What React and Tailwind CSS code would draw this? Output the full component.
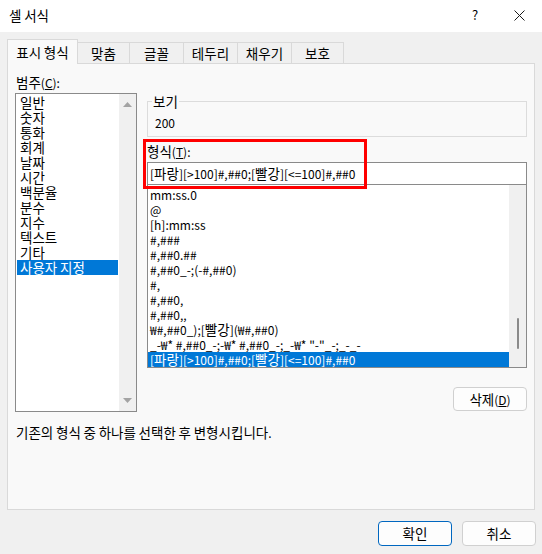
import React from "react";

const F = { fontFamily: '"Noto Sans CJK KR", "Noto Sans", sans-serif' };

function K({ t }) {
  const parts = t.split(/([\u3131-\uD7A3]+)/);
  return (
    <span>
      {parts.map((p, i) =>
        /[\u3131-\uD7A3]/.test(p) ? (
          <span key={i} className="text-[13.5px]">{p}</span>
        ) : (
          <React.Fragment key={i}>{p}</React.Fragment>
        )
      )}
    </span>
  );
}

const categories = ["일반", "숫자", "통화", "회계", "날짜", "시간", "백분율", "분수", "지수", "텍스트", "기타", "사용자 지정"];
const formats = [
  "mm:ss.0",
  "@",
  "[h]:mm:ss",
  "#,###",
  "#,##0.##",
  "#,##0_-;(-#,##0)",
  "#,",
  "#,##0,",
  "#,##0,,",
  "₩#,##0_);[빨강](₩#,##0)",
  '_-₩* #,##0_-;-₩* #,##0_-;_-₩* "-"_-;_-_-',
  "[파랑][>100]#,##0;[빨강][<=100]#,##0",
];

function Tab({ label, selected, w }) {
  if (selected) {
    return (
      <div className={`${w} h-[25px] -mb-px mr-[-1px] relative z-10 bg-[#f9f9f9] border border-b-0 border-[#d9d9d9] flex items-center justify-center text-black whitespace-nowrap`}>
        <K t={label} />
      </div>
    );
  }
  return (
    <div className={`${w} h-[21px] mr-[-1px] bg-[#f0f0f0] border border-b-0 border-[#d9d9d9] flex items-center justify-center text-black whitespace-nowrap`}>
      <K t={label} />
    </div>
  );
}

export default function App() {
  return (
    <div style={F} className="w-[542px] h-[554px] bg-[#f0f0f0] flex flex-col text-black text-[12px] overflow-hidden">
      {/* Title bar */}
      <div className="h-[32px] bg-white flex items-center shrink-0">
        <div className="pl-[9px] leading-[14px] pb-[2px]"><K t="셀 서식" /></div>
        <div className="flex-1" />
        <div className="w-[46px] flex items-center justify-center text-[13px] pb-[2px] mr-[-2px]">?</div>
        <div className="w-[46px] h-[32px] flex items-center justify-center pb-[2px]">
          <svg width="11" height="11" viewBox="0 0 11 11">
            <path d="M0.5 0.5 L10.5 10.5 M10.5 0.5 L0.5 10.5" stroke="#1a1a1a" strokeWidth="1" fill="none" />
          </svg>
        </div>
      </div>

      {/* Tabs */}
      <div className="flex items-end pl-[7px] mt-[7px] h-[24px] shrink-0">
        <Tab label="표시 형식" selected w="w-[71px]" />
        <Tab label="맞춤" w="w-[53px]" />
        <Tab label="글꼴" w="w-[55px]" />
        <Tab label="테두리" w="w-[55px]" />
        <Tab label="채우기" w="w-[55px]" />
        <Tab label="보호" w="w-[53px]" />
      </div>

      {/* Panel */}
      <div className="ml-[7px] w-[528px] h-[447px] bg-[#f9f9f9] border border-[#d9d9d9] flex flex-col px-[7px] shrink-0">
        <div className="flex gap-[10px]">
          {/* Left column */}
          <div className="w-[122px] pt-[11px] flex flex-col">
            <div className="h-[14px] leading-[14px] pl-[1px]"><K t="범주" />(<span className="underline">C</span>):</div>
            <div className="mt-[4px] h-[319px] border border-[#8a8a8a] bg-white flex">
              <div className="flex-1 p-[1px] flex flex-col">
                {categories.map((c, i) => (
                  <div
                    key={c}
                    className={`h-[15px] leading-[15px] pl-[3px] whitespace-nowrap ${i === categories.length - 1 ? "bg-[#0078d7] text-white" : ""}`}
                  >
                    <K t={c} />
                  </div>
                ))}
              </div>
              <div className="w-[17px] bg-[#f0f0f0] flex flex-col items-center justify-between py-[8px]">
                <svg width="9" height="5" viewBox="0 0 9 5"><path d="M0 5 L4.5 0 L9 5 Z" fill="#a3a3a3" /></svg>
                <svg width="9" height="5" viewBox="0 0 9 5"><path d="M0 0 L9 0 L4.5 5 Z" fill="#a3a3a3" /></svg>
              </div>
            </div>
          </div>

          {/* Right column */}
          <div className="w-[380px] pt-[30px] flex flex-col relative">
            <fieldset className="border border-[#dcdcdc] m-0 p-0 h-[43px]">
              <legend className="ml-[4px] px-[1px] leading-[14px]"><K t="보기" /></legend>
              <div className="pl-[7px] pt-[7px] leading-[14px]">200</div>
            </fieldset>
            <div className="mt-[7px] h-[14px] leading-[14px]"><K t="형식" />(<span className="underline">T</span>):</div>
            <div className="mt-[4px] h-[23px] border border-[#8a8a8a] bg-white flex items-center pl-[2px] whitespace-nowrap">
              <K t="[파랑][>100]#,##0;[빨강][<=100]#,##0" />
            </div>
            <div className="mt-[-1px] h-[184px] border border-[#8a8a8a] bg-white flex">
              <div className="flex-1 pt-[2px] flex flex-col">
                {formats.map((f, i) => (
                  <div
                    key={f}
                    className={`h-[15px] leading-[15px] pl-[2px] whitespace-nowrap ${i === formats.length - 1 ? "bg-[#0078d7] text-white" : ""}`}
                  >
                    <K t={f} />
                  </div>
                ))}
              </div>
              <div className="w-[17px] bg-[#f0f0f0] flex justify-center pt-[133px]">
                <div className="w-[2px] h-[31px] bg-[#8a8a8a] rounded-full" />
              </div>
            </div>
            <div className="mt-[19px] self-end w-[74px] h-[24px] bg-[#fdfdfd] border border-[#d0d0d0] rounded-[4px] flex items-center justify-center whitespace-nowrap">
              <span><K t="삭제" />(<span className="underline">D</span>)</span>
            </div>
            {/* Red highlight annotation */}
            <div className="absolute left-[-4px] top-[75px] w-[224px] h-[50px] border-[3px] border-[#ff0000] pointer-events-none" />
          </div>
        </div>
        <div className="mt-[13px] leading-[14px] pl-[1px]"><K t="기존의 형식 중 하나를 선택한 후 변형시킵니다." /></div>
      </div>

      {/* Buttons */}
      <div className="flex justify-end gap-[10px] pr-[6px] mt-[11px]">
        <div className="w-[74px] h-[25px] bg-[#fdfdfd] border border-[#0067c0] rounded-[4px] flex items-center justify-center"><K t="확인" /></div>
        <div className="w-[74px] h-[25px] bg-[#fdfdfd] border border-[#d0d0d0] rounded-[4px] flex items-center justify-center"><K t="취소" /></div>
      </div>
    </div>
  );
}
